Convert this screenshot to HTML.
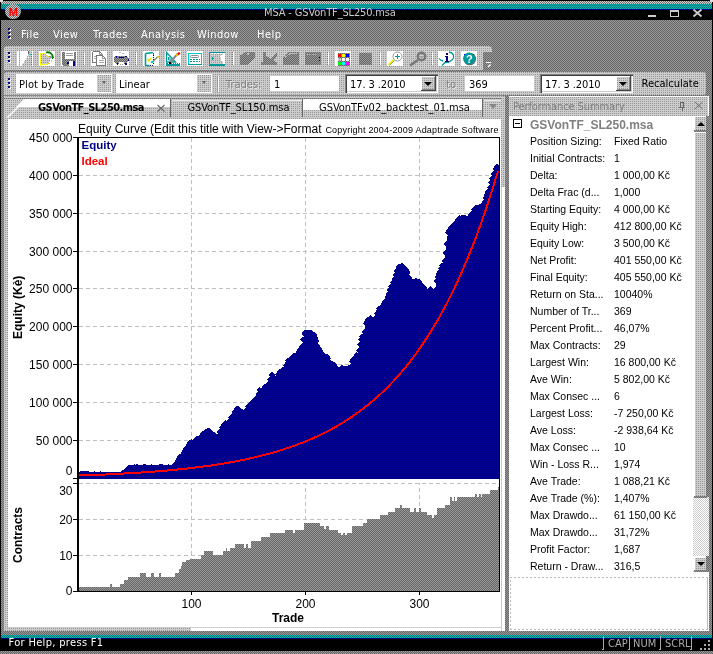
<!DOCTYPE html>
<html><head><meta charset="utf-8"><title>MSA - GSVonTF_SL250.msa</title>
<style>
html,body{margin:0;padding:0}
body{width:713px;height:654px;position:relative;overflow:hidden;font-family:"DejaVu Sans Condensed","Liberation Sans",sans-serif;font-size:11px;color:#000}
.abs{position:absolute;white-space:nowrap}
.dk{background:repeating-conic-gradient(#999 0% 25%,#666 0% 50%) 0 0/2px 2px}
.lt{background:#ccc conic-gradient(#999 25%,#ccc 0) 0 0/2px 2px}
.fr{background:repeating-conic-gradient(#ccc 0% 25%,#707070 0% 50%) 0 0/2px 2px}
.tl{background:repeating-conic-gradient(#00b4b4 0% 25%,#007878 0% 50%) 0 0/2px 2px}
.mn{color:#fff;letter-spacing:0.45px;top:28px;line-height:13px}
.rw{font-family:"Liberation Sans",sans-serif;font-size:10.5px;line-height:13px}
.tb{line-height:13px}
.wh{background:#fff}
</style></head><body>
<div class="abs dk" style="left:0;top:0;width:713px;height:654px"></div>
<div class="abs" style="left:0;top:0;width:713px;height:654px;will-change:transform">
<!-- title bar -->
<div class="abs" style="left:0;top:0;width:713px;height:1px;background:#000"></div>
<div class="abs fr" style="left:1px;top:1px;width:711px;height:3px"></div>
<div class="abs tl" style="left:1px;top:4px;width:711px;height:5px"></div>
<div class="abs" style="left:1px;top:9px;width:711px;height:1px;background:#000090"></div>
<div class="abs" style="left:0;top:10px;width:713px;height:10px;background:#000"></div>
<div class="abs" style="left:0;top:0;width:1px;height:654px;background:#000"></div>
<div class="abs" style="left:712px;top:0;width:1px;height:654px;background:#000"></div>
<div class="abs" style="left:0;top:0;width:3px;height:2px;background:#ddd"></div>
<div class="abs" style="left:710px;top:0;width:3px;height:2px;background:#ddd"></div>
<div class="abs fr" style="left:5px;top:4px;width:16px;height:15px;border-radius:8px"></div>
<div class="abs" style="left:8px;top:6px;width:10px;height:12px;font:bold 11px/12px 'Liberation Sans',sans-serif;color:#f00;text-align:center;letter-spacing:-0.5px">M</div>
<div class="abs tb" style="left:264px;top:6px;color:#ccc;letter-spacing:-0.15px">MSA - GSVonTF_SL250.msa</div>
<svg class="abs" style="left:640px;top:8px" width="70" height="12" viewBox="640 8 70 12" shape-rendering="crispEdges"><g fill="none" stroke="#ccc"><path d="M648,16h8" stroke-width="2"/><rect x="670.5" y="10.5" width="8" height="6"/><path d="M670,11h9" stroke-width="2"/><path d="M693.5,9.5l8,7M701.5,9.5l-8,7" stroke-width="1.8" shape-rendering="auto"/></g></svg>
<!-- menu -->
<div class="abs" style="left:9px;top:29px;width:2px;height:2px;background:#fff"></div><div class="abs" style="left:8px;top:28px;width:2px;height:2px;background:#000080"></div><div class="abs" style="left:9px;top:33px;width:2px;height:2px;background:#fff"></div><div class="abs" style="left:8px;top:32px;width:2px;height:2px;background:#000080"></div><div class="abs" style="left:9px;top:37px;width:2px;height:2px;background:#fff"></div><div class="abs" style="left:8px;top:36px;width:2px;height:2px;background:#000080"></div>
<div class="abs mn" style="left:21px">File</div><div class="abs mn" style="left:53px">View</div><div class="abs mn" style="left:93px">Trades</div><div class="abs mn" style="left:141px">Analysis</div><div class="abs mn" style="left:197px">Window</div><div class="abs mn" style="left:257px">Help</div>
<!-- toolbar 1 -->
<div class="abs lt" style="left:4px;top:46px;width:488px;height:6px;border-radius:3px 4px 0 0"></div><div class="abs lt" style="left:4px;top:52px;width:479px;height:18px"></div>
<div class="abs" style="left:9px;top:53px;width:2px;height:2px;background:#fff"></div><div class="abs" style="left:8px;top:52px;width:2px;height:2px;background:#000080"></div><div class="abs" style="left:9px;top:57px;width:2px;height:2px;background:#fff"></div><div class="abs" style="left:8px;top:56px;width:2px;height:2px;background:#000080"></div><div class="abs" style="left:9px;top:61px;width:2px;height:2px;background:#fff"></div><div class="abs" style="left:8px;top:60px;width:2px;height:2px;background:#000080"></div>
<svg class="abs" style="left:0;top:46px" width="500" height="24" viewBox="0 46 500 24" shape-rendering="crispEdges">
<defs><pattern id="dk2" width="2" height="2" patternUnits="userSpaceOnUse"><rect width="2" height="2" fill="#666"/><rect width="1" height="1" fill="#999"/><rect x="1" y="1" width="1" height="1" fill="#999"/></pattern>
<pattern id="lt2" width="2" height="2" patternUnits="userSpaceOnUse"><rect width="2" height="2" fill="#ccc"/><rect x="1" width="1" height="1" fill="#999"/></pattern></defs>
<rect x="17" y="51" width="2" height="15" fill="#fff"/><path d="M20,51H28V55.5L21.5,66H20Z" fill="#fff"/><rect x="32" y="51" width="1" height="15" fill="#fff"/><path d="M31.5,54v12" stroke="#666" stroke-dasharray="1 1"/><path d="M28.5,51v3" stroke="#666"/><rect x="30" y="54" width="1" height="1" fill="#0cc"/><rect x="28" y="57" width="1" height="1" fill="#fff"/><rect x="39" y="51" width="16" height="15" fill="#fff"/><path d="M41,54H45L47,56H51V58L49,64H41Z" fill="url(#lt2)"/><path d="M40.5,53.5V65.5" stroke="#ff0" stroke-width="1.4" fill="none"/><path d="M40,53.5H45M41,64.5H48" stroke="#ff0" stroke-width="1" fill="none"/><path d="M45,54.5l2,2h3M48.5,64l2-1.5l1.5-2.5" stroke="#dd0" fill="none" stroke-dasharray="2 1"/><path d="M46,52.5C50,51.5 53,54 53,58" stroke="#008000" stroke-width="1.8" fill="none" shape-rendering="auto"/><path d="M50.5,57h3.5l-1.5,2.5z" fill="#080"/><rect x="50" y="56" width="2" height="2" fill="#999"/><rect x="61" y="51" width="16" height="15" fill="#fff"/><path d="M62,52H76V66H63L62,65Z" fill="url(#dk2)"/><rect x="65" y="52" width="9" height="6.5" fill="#fff"/><path d="M66,53.5h7M66,55.5h7" stroke="#999"/><rect x="66" y="60" width="8" height="6" fill="url(#dk2)"/><rect x="69" y="60.5" width="4" height="5.5" fill="#fff"/><rect x="73" y="61" width="2" height="5" fill="#000080"/><rect x="67" y="62" width="2" height="2" fill="#000080"/><rect x="84" y="52" width="1" height="13" fill="#fff"/><path d="M83.5,52v13" stroke="#777" stroke-dasharray="1 1"/><rect x="91" y="51" width="16" height="15" fill="#fff"/><g fill="none" stroke="#777"><path d="M92.5,51.5H99.5L102.5,54.5V56M92.5,51.5V62.5H96"/><path d="M96.5,55.5H102.5L105.5,58.5V65.5H96.5Z"/><path d="M99,60.5h5M99,62.5h5M94,56.5h2M94,58.5h2" stroke="#aaa"/><path d="M99.5,51.5v3h3M102.5,55.5v3h3" stroke="#999"/></g><rect x="113" y="51" width="16" height="15" fill="#fff"/><path d="M113.5,58L116,55.5H126L128.5,58V61L126,63.5H116L113.5,61Z" fill="url(#dk2)"/><rect x="118" y="51" width="6" height="5" fill="#fff"/><path d="M118.5,52h2M122,53h2" stroke="#bbb"/><path d="M119,57.5h5" stroke="#000080"/><rect x="116" y="56" width="1" height="2" fill="#000080"/><rect x="125" y="56" width="2" height="1" fill="#000080"/><rect x="128" y="59" width="1" height="2" fill="#000080"/><rect x="116.5" y="62.5" width="1.5" height="2" fill="#000080"/><rect x="125" y="63" width="1.5" height="2" fill="#000080"/><rect x="119" y="62" width="5" height="4" fill="#fff"/><path d="M120,64h3" stroke="#999" stroke-dasharray="1 1"/><rect x="136" y="52" width="1" height="13" fill="#fff"/><path d="M135.5,52v13" stroke="#777" stroke-dasharray="1 1"/><rect x="143" y="51" width="16" height="15" fill="#fff"/><path d="M145.5,53.5L153,52.5M145.5,53.5V65.5M145,65.2L149.5,65.8" stroke="#099" stroke-width="1.6" fill="none" shape-rendering="auto"/><path d="M153.5,53v2" stroke="#099"/><path d="M153.5,55v9M150,65.5h3" stroke="#000080" stroke-dasharray="1 1"/><path d="M147.5,59l1.5,2l2-3" stroke="#dd0" stroke-width="1.4" fill="none" shape-rendering="auto"/><path d="M157.5,57L152.5,62" stroke="#888" stroke-width="1.6" shape-rendering="auto"/><rect x="157" y="56" width="2" height="2" fill="#cc0"/><rect x="151" y="61" width="2" height="2" fill="#0cc"/><rect x="165" y="51" width="16" height="15" fill="#fff"/><path d="M166.5,52.5V62H175.5Z" fill="none" stroke="#099" stroke-width="1.3" shape-rendering="auto"/><path d="M168.5,57v3h3z" fill="none" stroke="#099" shape-rendering="auto"/><rect x="166" y="62.5" width="14" height="3" fill="#099"/><path d="M167.5,63.5h12" stroke="#fff" stroke-dasharray="1 1"/><path d="M169.5,63L177.5,54" stroke="#888" stroke-width="2" shape-rendering="auto"/><path d="M177,53.5l2-1.5l1.5,1.5l-2,2z" fill="#f00" shape-rendering="auto"/><rect x="176" y="54" width="1.5" height="1.5" fill="#cc0"/><rect x="169" y="62" width="1.5" height="1.5" fill="#000"/><rect x="187" y="51" width="16" height="15" fill="#fff"/><rect x="188.5" y="53.5" width="13" height="10.5" fill="none" stroke="#0cc"/><path d="M188,64.5h14" stroke="#099"/><path d="M189,53h13" stroke="#0cc"/><rect x="190.5" y="55.5" width="8" height="2" fill="none" stroke="#888" rx="1" shape-rendering="auto"/><path d="M190,59.5h10M190,61.5h10" stroke="#099" stroke-dasharray="2 1"/><rect x="210" y="52" width="14" height="13" fill="url(#lt2)"/><rect x="209.5" y="52.5" width="15" height="12.5" fill="none" stroke="#099"/><path d="M209,64.5h16" stroke="#099" stroke-width="2"/><path d="M211,53.5h13" stroke="#fff" stroke-dasharray="2 1"/><path d="M212,57v3l2-1.5z" fill="#099"/><rect x="221" y="55" width="1.5" height="6" fill="#fff"/><rect x="220" y="56" width="1" height="1" fill="#fff"/><rect x="223" y="53" width="1.5" height="11" fill="#fff"/><rect x="233" y="52" width="1" height="13" fill="#fff"/><path d="M232.5,52v13" stroke="#777" stroke-dasharray="1 1"/><path d="M240,55.5L246,51.5H254.5V58L248,64.5L240,65Z" fill="url(#dk2)"/><rect x="247" y="53" width="2" height="2" fill="url(#lt2)"/><path d="M263,51.5h2.5V61.5H263ZM261,62h16v3H261ZM266,55.5L271,59L277,52V57L273,60L277,63H266Z" fill="url(#dk2)"/><path d="M283,57L289,51.5H298.5V65H283Z" fill="url(#dk2)"/><path d="M285,57.5L290,53.5H297" stroke="#bbb" fill="none"/><rect x="305" y="52" width="15.5" height="13" fill="url(#dk2)"/><path d="M306,54.5h13" stroke="#aaa" stroke-dasharray="2 1"/><rect x="319" y="57" width="1" height="1" fill="#000"/><rect x="319" y="60" width="1" height="1" fill="#000"/><rect x="328" y="52" width="1" height="13" fill="#fff"/><path d="M327.5,52v13" stroke="#777" stroke-dasharray="1 1"/><rect x="335" y="51" width="16" height="15" fill="#fff"/><rect x="337.5" y="53" width="12" height="12.5" fill="url(#dk2)"/><rect x="338" y="53.5" width="3" height="3" fill="#f00"/><rect x="342" y="53.5" width="3" height="3" fill="#ff0"/><rect x="346" y="53.5" width="3" height="3" fill="#00f"/><rect x="338" y="58.0" width="3" height="3" fill="url(#lt2)"/><rect x="342" y="58.0" width="3" height="3" fill="#fff"/><rect x="346" y="58.0" width="3" height="3" fill="#fff"/><rect x="338" y="62.0" width="3" height="3" fill="#0f0"/><rect x="342" y="62.0" width="3" height="3" fill="#0ff"/><rect x="346" y="62.0" width="3" height="3" fill="#f0f"/><rect x="359" y="53" width="13" height="12" fill="url(#dk2)"/><rect x="380" y="52" width="1" height="13" fill="#fff"/><path d="M379.5,52v13" stroke="#777" stroke-dasharray="1 1"/><rect x="387" y="51" width="16" height="15" fill="#fff"/><circle cx="397.5" cy="56.5" r="4.5" fill="#fff" stroke="#999" shape-rendering="auto"/><path d="M397.5,54v5M395,56.5h5" stroke="#099" stroke-width="1.2"/><path d="M388.5,65L394,59.5" stroke="#ee0" stroke-width="1.8" shape-rendering="auto"/><path d="M389.5,65.5L394.5,60.5" stroke="#888" stroke-width="0.8" shape-rendering="auto"/><g shape-rendering="auto"><circle cx="421.5" cy="56.5" r="3.8" fill="none" stroke="#777" stroke-width="2.4"/><path d="M418,60L410,65.5" stroke="#777" stroke-width="2.6"/><path d="M420,57h3" stroke="#888"/></g><rect x="432" y="52" width="1" height="13" fill="#fff"/><path d="M431.5,52v13" stroke="#777" stroke-dasharray="1 1"/><rect x="438" y="51" width="17" height="15" fill="#fff"/><path d="M449,52C454,53 455,57 452,60C450,62 446,62.5 445,62.5L442,65.5M439,58.5C440,60 441,60.5 443,61" fill="none" stroke="#099" stroke-width="1.3" shape-rendering="auto"/><rect x="446" y="52.5" width="2" height="2" fill="#000080"/><rect x="446" y="56" width="2" height="5" fill="#000080"/><rect x="445" y="56" width="1" height="1" fill="#000080"/><rect x="445" y="60.5" width="4" height="1" fill="#000080"/><rect x="461" y="51" width="16" height="15" fill="#fff"/><g shape-rendering="auto"><circle cx="469.8" cy="59" r="6.3" fill="#666"/><circle cx="469.2" cy="58.5" r="6" fill="#099"/><text x="469.3" y="63" font-family="'Liberation Sans',sans-serif" font-weight="bold" font-size="11" text-anchor="middle" fill="#fff">?</text></g><rect x="464" y="54" width="1" height="1" fill="#00f"/><rect x="473" y="54" width="1" height="1" fill="#00f"/><path d="M486,62.5h5" stroke="#fff"/><path d="M490.5,64.5L488,67" stroke="#fff" stroke-width="1.3" shape-rendering="auto"/></svg>
<!-- toolbar 2 -->
<div class="abs lt" style="left:4px;top:72px;width:702px;height:23px;border-radius:3px 3px 3px 0"></div>
<div class="abs" style="left:9px;top:79px;width:2px;height:2px;background:#fff"></div><div class="abs" style="left:8px;top:78px;width:2px;height:2px;background:#000080"></div><div class="abs" style="left:9px;top:83px;width:2px;height:2px;background:#fff"></div><div class="abs" style="left:8px;top:82px;width:2px;height:2px;background:#000080"></div><div class="abs" style="left:9px;top:87px;width:2px;height:2px;background:#fff"></div><div class="abs" style="left:8px;top:86px;width:2px;height:2px;background:#000080"></div>
<div class="abs wh" style="left:16px;top:74px;width:96px;height:19px"></div>
<div class="abs tb" style="left:19px;top:78px;letter-spacing:0.1px">Plot by Trade</div>
<div class="abs lt" style="left:97px;top:75px;width:14px;height:17px"></div>
<div class="abs" style="left:102px;top:81px;border:2.5px solid transparent;border-top:3px solid #666;width:0;height:0"></div>
<div class="abs wh" style="left:116px;top:74px;width:96px;height:19px"></div>
<div class="abs tb" style="left:119px;top:78px">Linear</div>
<div class="abs lt" style="left:197px;top:75px;width:14px;height:17px"></div>
<div class="abs" style="left:202px;top:81px;border:2.5px solid transparent;border-top:3px solid #666;width:0;height:0"></div>
<div class="abs" style="left:218px;top:76px;width:1px;height:16px;background:#fff"></div><div class="abs" style="left:217px;top:76px;width:1px;height:16px;background:#999"></div>
<div class="abs tb" style="left:226px;top:78px;color:#808080;text-shadow:1px 1px 0 #e8e8e8">Trades:</div>
<div class="abs wh" style="left:270px;top:76px;width:69px;height:15px"></div>
<div class="abs tb" style="left:274px;top:78px">1</div>
<div class="abs wh" style="left:345px;top:74px;width:93px;height:19px;box-shadow:inset 1px 1px 0 #808080,inset 2px 2px 0 #404040,inset -1px -1px 0 #fff,inset -2px -2px 0 #ccc"></div>
<div class="abs tb" style="left:350px;top:78px;letter-spacing:-0.1px">17. 3 .2010</div>
<div class="abs lt" style="left:421px;top:76px;width:15px;height:15px;box-shadow:inset -1px -1px 0 #444,inset 1px 1px 0 #fff,inset -2px -2px 0 #888"></div>
<div class="abs" style="left:424px;top:81.5px;border:4px solid transparent;border-top:4.5px solid #000;width:0;height:0"></div>
<div class="abs tb" style="left:446px;top:78px;color:#808080;text-shadow:1px 1px 0 #e8e8e8">to</div>
<div class="abs wh" style="left:465px;top:76px;width:69px;height:15px"></div>
<div class="abs tb" style="left:469px;top:78px">369</div>
<div class="abs wh" style="left:540px;top:74px;width:93px;height:19px;box-shadow:inset 1px 1px 0 #808080,inset 2px 2px 0 #404040,inset -1px -1px 0 #fff,inset -2px -2px 0 #ccc"></div>
<div class="abs tb" style="left:545px;top:78px;letter-spacing:-0.1px">17. 3 .2010</div>
<div class="abs lt" style="left:616px;top:76px;width:15px;height:15px;box-shadow:inset -1px -1px 0 #444,inset 1px 1px 0 #fff,inset -2px -2px 0 #888"></div>
<div class="abs" style="left:619px;top:81.5px;border:4px solid transparent;border-top:4.5px solid #000;width:0;height:0"></div>
<div class="abs tb" style="left:641.5px;top:77px">Recalculate</div>
<!-- tab strip -->
<div class="abs lt" style="left:4px;top:96px;width:501px;height:535px"></div>
<div class="abs" style="left:4px;top:95px;width:498px;height:1px;background:#888"></div>
<div class="abs dk" style="left:4px;top:98px;width:498px;height:1px"></div>
<svg class="abs" style="left:4px;top:98px" width="498" height="21" viewBox="4 98 498 21">
<path d="M16,107 L24,99 H170 V107 Z" fill="#fff"/>
<path d="M303,99 H482 V110 H303 Z" fill="#fff"/>
<path d="M7.5,117.5 L25.5,99.5" stroke="#fff" stroke-width="1.4" fill="none"/>
<path d="M172,100.5H302M484,100.5H501" stroke="#e8e8e8" stroke-width="1" shape-rendering="crispEdges"/>
<g stroke="#666" stroke-width="1" shape-rendering="crispEdges"><line x1="170.5" x2="170.5" y1="99" y2="117"/><line x1="302.5" x2="302.5" y1="99" y2="117"/><line x1="482.5" x2="482.5" y1="99" y2="117"/></g>
<path d="M157.5,105l7,6.5M164.5,105l-7,6.5" stroke="#666" stroke-width="1.1" fill="none"/>
<path d="M489,104h8l-4,5z" fill="#888"/>
</svg>
<div class="abs lt" style="left:303px;top:110px;width:179px;height:8px"></div>
<div class="abs tb" style="left:38px;top:101px;font-weight:bold;letter-spacing:-0.55px">GSVonTF_SL250.msa</div>
<div class="abs tb" style="left:187.5px;top:101px;letter-spacing:-0.1px">GSVonTF_SL150.msa</div>
<div class="abs tb" style="left:319px;top:101px;letter-spacing:-0.02px">GSVonTFv02_backtest_01.msa</div>
<!-- chart area -->
<div class="abs wh" style="left:8px;top:119px;width:493px;height:508px"></div>
<div class="abs wh" style="left:191px;top:627px;width:314px;height:4px;border-top:1px solid #ccc;box-sizing:border-box"></div>
<div class="abs wh" style="left:501px;top:187px;width:4px;height:444px;border-left:1px solid #ccc;box-sizing:border-box"></div>
<svg class="abs" style="left:0;top:0" width="713" height="654" viewBox="0 0 713 654" shape-rendering="crispEdges">
<defs>
<pattern id="dk" width="2" height="2" patternUnits="userSpaceOnUse"><rect width="2" height="2" fill="#666"/><rect width="1" height="1" fill="#999"/><rect x="1" y="1" width="1" height="1" fill="#999"/></pattern>
<pattern id="nv" width="2" height="2" patternUnits="userSpaceOnUse"><rect width="2" height="2" fill="#000080"/><rect width="1" height="1" fill="#000099"/><rect x="1" y="1" width="1" height="1" fill="#000099"/></pattern>
<clipPath id="cp"><rect x="79" y="138" width="420" height="341"/></clipPath>
</defs>
<g stroke="#c0c0c0" stroke-dasharray="4 3" stroke-width="1"><line x1="79" x2="499" y1="440.5" y2="440.5"/><line x1="79" x2="499" y1="402.5" y2="402.5"/><line x1="79" x2="499" y1="364.5" y2="364.5"/><line x1="79" x2="499" y1="326.5" y2="326.5"/><line x1="79" x2="499" y1="288.5" y2="288.5"/><line x1="79" x2="499" y1="251.5" y2="251.5"/><line x1="79" x2="499" y1="213.5" y2="213.5"/><line x1="79" x2="499" y1="175.5" y2="175.5"/><line x1="79" x2="499" y1="555.5" y2="555.5"/><line x1="79" x2="499" y1="519.5" y2="519.5"/><line x1="79" x2="499" y1="483.5" y2="483.5"/><line x1="191.5" x2="191.5" y1="138" y2="590"/><line x1="305.5" x2="305.5" y1="138" y2="590"/><line x1="419.5" x2="419.5" y1="138" y2="590"/></g>
<path d="M78,478.6 L78.4,474.7 L79.6,474.5 L80.7,474.3 L81.9,474.0 L83.0,473.8 L84.1,474.1 L85.3,474.0 L86.4,474.2 L87.6,474.3 L88.7,474.3 L89.8,475.1 L91.0,474.8 L92.1,474.7 L93.3,474.5 L94.4,474.4 L95.5,474.8 L96.7,474.6 L97.8,474.4 L99.0,474.3 L100.1,474.1 L101.2,474.6 L102.4,474.5 L103.5,474.5 L104.7,474.4 L105.8,474.4 L106.9,474.9 L108.1,474.8 L109.2,474.8 L110.4,474.7 L111.5,474.6 L112.6,474.9 L113.8,474.8 L114.9,474.7 L116.1,474.5 L117.2,474.4 L118.3,474.8 L119.5,474.9 L120.6,474.9 L121.8,473.8 L122.9,472.2 L124.0,473.0 L125.2,471.6 L126.3,470.2 L127.5,468.7 L128.6,467.5 L129.7,468.0 L130.9,467.5 L132.0,467.4 L133.2,467.3 L134.3,467.2 L135.4,467.6 L136.6,467.4 L137.7,467.3 L138.9,467.2 L140.0,467.1 L141.1,467.5 L142.3,467.4 L143.4,467.4 L144.6,467.3 L145.7,467.2 L146.8,467.6 L148.0,467.5 L149.1,467.5 L150.3,467.4 L151.4,467.3 L152.5,467.6 L153.7,467.5 L154.8,467.4 L156.0,467.3 L157.1,467.2 L158.2,467.5 L159.4,467.4 L160.5,467.3 L161.7,467.3 L162.8,467.2 L163.9,467.7 L165.1,467.6 L166.2,467.6 L167.4,467.5 L168.5,467.4 L169.6,467.9 L170.8,467.8 L171.9,468.2 L173.1,467.4 L174.2,465.2 L175.3,465.8 L176.5,463.5 L177.6,461.3 L178.8,459.0 L179.9,456.8 L181.0,457.3 L182.2,455.2 L183.3,453.1 L184.5,450.9 L185.6,448.6 L186.7,449.0 L187.9,446.6 L189.0,444.3 L190.2,442.7 L191.3,442.2 L192.4,443.0 L193.6,442.1 L194.7,441.1 L195.9,440.0 L197.0,438.9 L198.1,439.7 L199.3,438.8 L200.4,437.5 L201.6,436.0 L202.7,434.3 L203.8,435.3 L205.0,433.4 L206.1,431.7 L207.3,431.0 L208.4,430.5 L209.5,431.1 L210.7,432.2 L211.8,433.4 L213.0,434.1 L214.1,434.5 L215.2,437.4 L216.4,437.2 L217.5,438.3 L218.7,435.8 L219.8,431.9 L220.9,430.8 L222.1,427.5 L223.2,426.2 L224.4,424.6 L225.5,423.4 L226.6,424.2 L227.8,422.9 L228.9,421.9 L230.1,420.2 L231.2,417.4 L232.3,417.3 L233.5,414.5 L234.6,412.3 L235.8,410.3 L236.9,408.3 L238.0,408.1 L239.2,410.4 L240.3,411.4 L241.5,412.1 L242.6,411.7 L243.7,412.4 L244.9,411.3 L246.0,410.3 L247.2,409.1 L248.3,406.7 L249.4,406.1 L250.6,404.2 L251.7,402.6 L252.9,401.4 L254.0,400.2 L255.1,401.4 L256.3,400.2 L257.4,397.5 L258.6,393.9 L259.7,390.3 L260.8,391.8 L262.0,390.0 L263.1,389.0 L264.3,388.0 L265.4,386.6 L266.5,387.6 L267.7,385.9 L268.8,383.7 L270.0,379.4 L271.1,375.1 L272.2,375.1 L273.4,377.0 L274.5,377.9 L275.7,378.7 L276.8,377.9 L277.9,374.4 L279.1,373.3 L280.2,371.7 L281.4,370.8 L282.5,370.0 L283.6,371.5 L284.8,368.7 L285.9,365.9 L287.1,363.0 L288.2,360.8 L289.3,361.8 L290.5,360.1 L291.6,358.4 L292.8,356.6 L293.9,355.2 L295.0,356.0 L296.2,355.3 L297.3,354.6 L298.5,352.3 L299.6,349.8 L300.7,350.0 L301.9,346.2 L303.0,339.8 L304.2,334.0 L305.3,332.6 L306.4,333.2 L307.6,333.0 L308.7,333.0 L309.9,332.9 L311.0,332.9 L312.1,333.6 L313.3,334.6 L314.4,335.4 L315.6,338.1 L316.7,340.8 L317.8,346.2 L319.0,348.5 L320.1,350.9 L321.3,353.2 L322.4,354.4 L323.5,356.3 L324.7,356.1 L325.8,356.6 L327.0,356.9 L328.1,358.2 L329.2,362.3 L330.4,363.3 L331.5,363.6 L332.7,364.0 L333.8,364.5 L334.9,367.3 L336.1,368.1 L337.2,369.0 L338.4,371.1 L339.5,370.0 L340.6,368.8 L341.8,367.4 L342.9,368.5 L344.1,368.8 L345.2,369.0 L346.3,369.3 L347.5,368.9 L348.6,368.3 L349.8,368.0 L350.9,366.3 L352.0,361.2 L353.2,359.7 L354.3,358.0 L355.5,356.6 L356.6,355.2 L357.7,356.5 L358.9,350.8 L360.0,344.9 L361.2,339.8 L362.3,336.4 L363.4,335.7 L364.6,332.3 L365.7,323.4 L366.9,321.4 L368.0,319.4 L369.1,319.3 L370.3,318.1 L371.4,319.3 L372.6,319.6 L373.7,320.3 L374.8,320.0 L376.0,317.0 L377.1,313.9 L378.3,310.9 L379.4,308.6 L380.5,309.5 L381.7,307.6 L382.8,305.7 L384.0,303.8 L385.1,301.4 L386.2,300.7 L387.4,297.2 L388.5,293.7 L389.7,290.2 L390.8,286.7 L391.9,286.0 L393.1,282.5 L394.2,278.9 L395.4,275.1 L396.5,271.4 L397.6,270.4 L398.8,267.2 L399.9,266.2 L401.1,266.1 L402.2,266.1 L403.3,267.6 L404.5,268.1 L405.6,269.6 L406.8,271.4 L407.9,273.1 L409.0,277.6 L410.2,279.7 L411.3,282.1 L412.5,284.3 L413.6,282.4 L414.7,282.5 L415.9,280.3 L417.0,281.2 L418.2,281.8 L419.3,282.2 L420.4,284.7 L421.6,285.5 L422.7,286.0 L423.9,287.5 L425.0,289.1 L426.1,293.3 L427.3,293.8 L428.4,292.9 L429.6,290.6 L430.7,288.8 L431.8,292.7 L433.0,293.2 L434.1,295.1 L435.3,289.9 L436.4,281.4 L437.5,276.8 L438.7,274.1 L439.8,271.3 L441.0,268.5 L442.1,265.7 L443.2,265.7 L444.4,261.0 L445.5,252.6 L446.7,244.2 L447.8,232.8 L448.9,230.5 L450.1,229.0 L451.2,227.4 L452.4,226.0 L453.5,224.6 L454.6,225.9 L455.8,224.0 L456.9,222.0 L458.1,219.9 L459.2,217.9 L460.3,218.8 L461.5,218.2 L462.6,218.1 L463.8,218.0 L464.9,217.9 L466.0,218.2 L467.2,218.4 L468.3,218.7 L469.5,217.3 L470.6,214.8 L471.7,215.0 L472.9,212.4 L474.0,209.9 L475.2,208.4 L476.3,207.6 L477.4,208.2 L478.6,207.6 L479.7,207.0 L480.9,206.4 L482.0,205.7 L483.1,206.1 L484.3,202.0 L485.4,198.1 L486.6,194.9 L487.7,191.8 L488.8,191.3 L490.0,187.5 L491.1,182.9 L492.3,178.4 L493.4,174.4 L494.5,173.1 L495.7,169.1 L496.8,166.7 L498.0,167.6 L499.5,167.6 L499.5,478.6 Z" fill="url(#nv)"/>
<path d="M78.4,471.7l3.0,3.0l-3.0,3.0l-3.0,-3.0zM79.6,471.5l3.0,3.0l-3.0,3.0l-3.0,-3.0zM80.7,471.3l3.0,3.0l-3.0,3.0l-3.0,-3.0zM81.9,471.0l3.0,3.0l-3.0,3.0l-3.0,-3.0zM83.0,470.8l3.0,3.0l-3.0,3.0l-3.0,-3.0zM84.1,471.1l3.0,3.0l-3.0,3.0l-3.0,-3.0zM85.3,471.0l3.0,3.0l-3.0,3.0l-3.0,-3.0zM86.4,471.2l3.0,3.0l-3.0,3.0l-3.0,-3.0zM87.6,471.3l3.0,3.0l-3.0,3.0l-3.0,-3.0zM88.7,471.3l3.0,3.0l-3.0,3.0l-3.0,-3.0zM89.8,472.1l3.0,3.0l-3.0,3.0l-3.0,-3.0zM91.0,471.8l3.0,3.0l-3.0,3.0l-3.0,-3.0zM92.1,471.7l3.0,3.0l-3.0,3.0l-3.0,-3.0zM93.3,471.5l3.0,3.0l-3.0,3.0l-3.0,-3.0zM94.4,471.4l3.0,3.0l-3.0,3.0l-3.0,-3.0zM95.5,471.8l3.0,3.0l-3.0,3.0l-3.0,-3.0zM96.7,471.6l3.0,3.0l-3.0,3.0l-3.0,-3.0zM97.8,471.4l3.0,3.0l-3.0,3.0l-3.0,-3.0zM99.0,471.3l3.0,3.0l-3.0,3.0l-3.0,-3.0zM100.1,471.1l3.0,3.0l-3.0,3.0l-3.0,-3.0zM101.2,471.6l3.0,3.0l-3.0,3.0l-3.0,-3.0zM102.4,471.5l3.0,3.0l-3.0,3.0l-3.0,-3.0zM103.5,471.5l3.0,3.0l-3.0,3.0l-3.0,-3.0zM104.7,471.4l3.0,3.0l-3.0,3.0l-3.0,-3.0zM105.8,471.4l3.0,3.0l-3.0,3.0l-3.0,-3.0zM106.9,471.9l3.0,3.0l-3.0,3.0l-3.0,-3.0zM108.1,471.8l3.0,3.0l-3.0,3.0l-3.0,-3.0zM109.2,471.8l3.0,3.0l-3.0,3.0l-3.0,-3.0zM110.4,471.7l3.0,3.0l-3.0,3.0l-3.0,-3.0zM111.5,471.6l3.0,3.0l-3.0,3.0l-3.0,-3.0zM112.6,471.9l3.0,3.0l-3.0,3.0l-3.0,-3.0zM113.8,471.8l3.0,3.0l-3.0,3.0l-3.0,-3.0zM114.9,471.7l3.0,3.0l-3.0,3.0l-3.0,-3.0zM116.1,471.5l3.0,3.0l-3.0,3.0l-3.0,-3.0zM117.2,471.4l3.0,3.0l-3.0,3.0l-3.0,-3.0zM118.3,471.8l3.0,3.0l-3.0,3.0l-3.0,-3.0zM119.5,471.9l3.0,3.0l-3.0,3.0l-3.0,-3.0zM120.6,471.9l3.0,3.0l-3.0,3.0l-3.0,-3.0zM121.8,470.8l3.0,3.0l-3.0,3.0l-3.0,-3.0zM122.9,469.2l3.0,3.0l-3.0,3.0l-3.0,-3.0zM124.0,470.0l3.0,3.0l-3.0,3.0l-3.0,-3.0zM125.2,468.6l3.0,3.0l-3.0,3.0l-3.0,-3.0zM126.3,467.2l3.0,3.0l-3.0,3.0l-3.0,-3.0zM127.5,465.7l3.0,3.0l-3.0,3.0l-3.0,-3.0zM128.6,464.5l3.0,3.0l-3.0,3.0l-3.0,-3.0zM129.7,465.0l3.0,3.0l-3.0,3.0l-3.0,-3.0zM130.9,464.5l3.0,3.0l-3.0,3.0l-3.0,-3.0zM132.0,464.4l3.0,3.0l-3.0,3.0l-3.0,-3.0zM133.2,464.3l3.0,3.0l-3.0,3.0l-3.0,-3.0zM134.3,464.2l3.0,3.0l-3.0,3.0l-3.0,-3.0zM135.4,464.6l3.0,3.0l-3.0,3.0l-3.0,-3.0zM136.6,464.4l3.0,3.0l-3.0,3.0l-3.0,-3.0zM137.7,464.3l3.0,3.0l-3.0,3.0l-3.0,-3.0zM138.9,464.2l3.0,3.0l-3.0,3.0l-3.0,-3.0zM140.0,464.1l3.0,3.0l-3.0,3.0l-3.0,-3.0zM141.1,464.5l3.0,3.0l-3.0,3.0l-3.0,-3.0zM142.3,464.4l3.0,3.0l-3.0,3.0l-3.0,-3.0zM143.4,464.4l3.0,3.0l-3.0,3.0l-3.0,-3.0zM144.6,464.3l3.0,3.0l-3.0,3.0l-3.0,-3.0zM145.7,464.2l3.0,3.0l-3.0,3.0l-3.0,-3.0zM146.8,464.6l3.0,3.0l-3.0,3.0l-3.0,-3.0zM148.0,464.5l3.0,3.0l-3.0,3.0l-3.0,-3.0zM149.1,464.5l3.0,3.0l-3.0,3.0l-3.0,-3.0zM150.3,464.4l3.0,3.0l-3.0,3.0l-3.0,-3.0zM151.4,464.3l3.0,3.0l-3.0,3.0l-3.0,-3.0zM152.5,464.6l3.0,3.0l-3.0,3.0l-3.0,-3.0zM153.7,464.5l3.0,3.0l-3.0,3.0l-3.0,-3.0zM154.8,464.4l3.0,3.0l-3.0,3.0l-3.0,-3.0zM156.0,464.3l3.0,3.0l-3.0,3.0l-3.0,-3.0zM157.1,464.2l3.0,3.0l-3.0,3.0l-3.0,-3.0zM158.2,464.5l3.0,3.0l-3.0,3.0l-3.0,-3.0zM159.4,464.4l3.0,3.0l-3.0,3.0l-3.0,-3.0zM160.5,464.3l3.0,3.0l-3.0,3.0l-3.0,-3.0zM161.7,464.3l3.0,3.0l-3.0,3.0l-3.0,-3.0zM162.8,464.2l3.0,3.0l-3.0,3.0l-3.0,-3.0zM163.9,464.7l3.0,3.0l-3.0,3.0l-3.0,-3.0zM165.1,464.6l3.0,3.0l-3.0,3.0l-3.0,-3.0zM166.2,464.6l3.0,3.0l-3.0,3.0l-3.0,-3.0zM167.4,464.5l3.0,3.0l-3.0,3.0l-3.0,-3.0zM168.5,464.4l3.0,3.0l-3.0,3.0l-3.0,-3.0zM169.6,464.9l3.0,3.0l-3.0,3.0l-3.0,-3.0zM170.8,464.8l3.0,3.0l-3.0,3.0l-3.0,-3.0zM171.9,465.2l3.0,3.0l-3.0,3.0l-3.0,-3.0zM173.1,464.4l3.0,3.0l-3.0,3.0l-3.0,-3.0zM174.2,462.2l3.0,3.0l-3.0,3.0l-3.0,-3.0zM175.3,462.8l3.0,3.0l-3.0,3.0l-3.0,-3.0zM176.5,460.5l3.0,3.0l-3.0,3.0l-3.0,-3.0zM177.6,458.3l3.0,3.0l-3.0,3.0l-3.0,-3.0zM178.8,456.0l3.0,3.0l-3.0,3.0l-3.0,-3.0zM179.9,453.8l3.0,3.0l-3.0,3.0l-3.0,-3.0zM181.0,454.3l3.0,3.0l-3.0,3.0l-3.0,-3.0zM182.2,452.2l3.0,3.0l-3.0,3.0l-3.0,-3.0zM183.3,450.1l3.0,3.0l-3.0,3.0l-3.0,-3.0zM184.5,447.9l3.0,3.0l-3.0,3.0l-3.0,-3.0zM185.6,445.6l3.0,3.0l-3.0,3.0l-3.0,-3.0zM186.7,446.0l3.0,3.0l-3.0,3.0l-3.0,-3.0zM187.9,443.6l3.0,3.0l-3.0,3.0l-3.0,-3.0zM189.0,441.3l3.0,3.0l-3.0,3.0l-3.0,-3.0zM190.2,439.7l3.0,3.0l-3.0,3.0l-3.0,-3.0zM191.3,439.2l3.0,3.0l-3.0,3.0l-3.0,-3.0zM192.4,440.0l3.0,3.0l-3.0,3.0l-3.0,-3.0zM193.6,439.1l3.0,3.0l-3.0,3.0l-3.0,-3.0zM194.7,438.1l3.0,3.0l-3.0,3.0l-3.0,-3.0zM195.9,437.0l3.0,3.0l-3.0,3.0l-3.0,-3.0zM197.0,435.9l3.0,3.0l-3.0,3.0l-3.0,-3.0zM198.1,436.7l3.0,3.0l-3.0,3.0l-3.0,-3.0zM199.3,435.8l3.0,3.0l-3.0,3.0l-3.0,-3.0zM200.4,434.5l3.0,3.0l-3.0,3.0l-3.0,-3.0zM201.6,433.0l3.0,3.0l-3.0,3.0l-3.0,-3.0zM202.7,431.3l3.0,3.0l-3.0,3.0l-3.0,-3.0zM203.8,432.3l3.0,3.0l-3.0,3.0l-3.0,-3.0zM205.0,430.4l3.0,3.0l-3.0,3.0l-3.0,-3.0zM206.1,428.7l3.0,3.0l-3.0,3.0l-3.0,-3.0zM207.3,428.0l3.0,3.0l-3.0,3.0l-3.0,-3.0zM208.4,427.5l3.0,3.0l-3.0,3.0l-3.0,-3.0zM209.5,428.1l3.0,3.0l-3.0,3.0l-3.0,-3.0zM210.7,429.2l3.0,3.0l-3.0,3.0l-3.0,-3.0zM211.8,430.4l3.0,3.0l-3.0,3.0l-3.0,-3.0zM213.0,431.1l3.0,3.0l-3.0,3.0l-3.0,-3.0zM214.1,431.5l3.0,3.0l-3.0,3.0l-3.0,-3.0zM215.2,434.4l3.0,3.0l-3.0,3.0l-3.0,-3.0zM216.4,434.2l3.0,3.0l-3.0,3.0l-3.0,-3.0zM217.5,435.3l3.0,3.0l-3.0,3.0l-3.0,-3.0zM218.7,432.8l3.0,3.0l-3.0,3.0l-3.0,-3.0zM219.8,428.9l3.0,3.0l-3.0,3.0l-3.0,-3.0zM220.9,427.8l3.0,3.0l-3.0,3.0l-3.0,-3.0zM222.1,424.5l3.0,3.0l-3.0,3.0l-3.0,-3.0zM223.2,423.2l3.0,3.0l-3.0,3.0l-3.0,-3.0zM224.4,421.6l3.0,3.0l-3.0,3.0l-3.0,-3.0zM225.5,420.4l3.0,3.0l-3.0,3.0l-3.0,-3.0zM226.6,421.2l3.0,3.0l-3.0,3.0l-3.0,-3.0zM227.8,419.9l3.0,3.0l-3.0,3.0l-3.0,-3.0zM228.9,418.9l3.0,3.0l-3.0,3.0l-3.0,-3.0zM230.1,417.2l3.0,3.0l-3.0,3.0l-3.0,-3.0zM231.2,414.4l3.0,3.0l-3.0,3.0l-3.0,-3.0zM232.3,414.3l3.0,3.0l-3.0,3.0l-3.0,-3.0zM233.5,411.5l3.0,3.0l-3.0,3.0l-3.0,-3.0zM234.6,409.3l3.0,3.0l-3.0,3.0l-3.0,-3.0zM235.8,407.3l3.0,3.0l-3.0,3.0l-3.0,-3.0zM236.9,405.3l3.0,3.0l-3.0,3.0l-3.0,-3.0zM238.0,405.1l3.0,3.0l-3.0,3.0l-3.0,-3.0zM239.2,407.4l3.0,3.0l-3.0,3.0l-3.0,-3.0zM240.3,408.4l3.0,3.0l-3.0,3.0l-3.0,-3.0zM241.5,409.1l3.0,3.0l-3.0,3.0l-3.0,-3.0zM242.6,408.7l3.0,3.0l-3.0,3.0l-3.0,-3.0zM243.7,409.4l3.0,3.0l-3.0,3.0l-3.0,-3.0zM244.9,408.3l3.0,3.0l-3.0,3.0l-3.0,-3.0zM246.0,407.3l3.0,3.0l-3.0,3.0l-3.0,-3.0zM247.2,406.1l3.0,3.0l-3.0,3.0l-3.0,-3.0zM248.3,403.7l3.0,3.0l-3.0,3.0l-3.0,-3.0zM249.4,403.1l3.0,3.0l-3.0,3.0l-3.0,-3.0zM250.6,401.2l3.0,3.0l-3.0,3.0l-3.0,-3.0zM251.7,399.6l3.0,3.0l-3.0,3.0l-3.0,-3.0zM252.9,398.4l3.0,3.0l-3.0,3.0l-3.0,-3.0zM254.0,397.2l3.0,3.0l-3.0,3.0l-3.0,-3.0zM255.1,398.4l3.0,3.0l-3.0,3.0l-3.0,-3.0zM256.3,397.2l3.0,3.0l-3.0,3.0l-3.0,-3.0zM257.4,394.5l3.0,3.0l-3.0,3.0l-3.0,-3.0zM258.6,390.9l3.0,3.0l-3.0,3.0l-3.0,-3.0zM259.7,387.3l3.0,3.0l-3.0,3.0l-3.0,-3.0zM260.8,388.8l3.0,3.0l-3.0,3.0l-3.0,-3.0zM262.0,387.0l3.0,3.0l-3.0,3.0l-3.0,-3.0zM263.1,386.0l3.0,3.0l-3.0,3.0l-3.0,-3.0zM264.3,385.0l3.0,3.0l-3.0,3.0l-3.0,-3.0zM265.4,383.6l3.0,3.0l-3.0,3.0l-3.0,-3.0zM266.5,384.6l3.0,3.0l-3.0,3.0l-3.0,-3.0zM267.7,382.9l3.0,3.0l-3.0,3.0l-3.0,-3.0zM268.8,380.7l3.0,3.0l-3.0,3.0l-3.0,-3.0zM270.0,376.4l3.0,3.0l-3.0,3.0l-3.0,-3.0zM271.1,372.1l3.0,3.0l-3.0,3.0l-3.0,-3.0zM272.2,372.1l3.0,3.0l-3.0,3.0l-3.0,-3.0zM273.4,374.0l3.0,3.0l-3.0,3.0l-3.0,-3.0zM274.5,374.9l3.0,3.0l-3.0,3.0l-3.0,-3.0zM275.7,375.7l3.0,3.0l-3.0,3.0l-3.0,-3.0zM276.8,374.9l3.0,3.0l-3.0,3.0l-3.0,-3.0zM277.9,371.4l3.0,3.0l-3.0,3.0l-3.0,-3.0zM279.1,370.3l3.0,3.0l-3.0,3.0l-3.0,-3.0zM280.2,368.7l3.0,3.0l-3.0,3.0l-3.0,-3.0zM281.4,367.8l3.0,3.0l-3.0,3.0l-3.0,-3.0zM282.5,367.0l3.0,3.0l-3.0,3.0l-3.0,-3.0zM283.6,368.5l3.0,3.0l-3.0,3.0l-3.0,-3.0zM284.8,365.7l3.0,3.0l-3.0,3.0l-3.0,-3.0zM285.9,362.9l3.0,3.0l-3.0,3.0l-3.0,-3.0zM287.1,360.0l3.0,3.0l-3.0,3.0l-3.0,-3.0zM288.2,357.8l3.0,3.0l-3.0,3.0l-3.0,-3.0zM289.3,358.8l3.0,3.0l-3.0,3.0l-3.0,-3.0zM290.5,357.1l3.0,3.0l-3.0,3.0l-3.0,-3.0zM291.6,355.4l3.0,3.0l-3.0,3.0l-3.0,-3.0zM292.8,353.6l3.0,3.0l-3.0,3.0l-3.0,-3.0zM293.9,352.2l3.0,3.0l-3.0,3.0l-3.0,-3.0zM295.0,353.0l3.0,3.0l-3.0,3.0l-3.0,-3.0zM296.2,352.3l3.0,3.0l-3.0,3.0l-3.0,-3.0zM297.3,351.6l3.0,3.0l-3.0,3.0l-3.0,-3.0zM298.5,349.3l3.0,3.0l-3.0,3.0l-3.0,-3.0zM299.6,346.8l3.0,3.0l-3.0,3.0l-3.0,-3.0zM300.7,347.0l3.0,3.0l-3.0,3.0l-3.0,-3.0zM301.9,343.2l3.0,3.0l-3.0,3.0l-3.0,-3.0zM303.0,336.8l3.0,3.0l-3.0,3.0l-3.0,-3.0zM304.2,331.0l3.0,3.0l-3.0,3.0l-3.0,-3.0zM305.3,329.6l3.0,3.0l-3.0,3.0l-3.0,-3.0zM306.4,330.2l3.0,3.0l-3.0,3.0l-3.0,-3.0zM307.6,330.0l3.0,3.0l-3.0,3.0l-3.0,-3.0zM308.7,330.0l3.0,3.0l-3.0,3.0l-3.0,-3.0zM309.9,329.9l3.0,3.0l-3.0,3.0l-3.0,-3.0zM311.0,329.9l3.0,3.0l-3.0,3.0l-3.0,-3.0zM312.1,330.6l3.0,3.0l-3.0,3.0l-3.0,-3.0zM313.3,331.6l3.0,3.0l-3.0,3.0l-3.0,-3.0zM314.4,332.4l3.0,3.0l-3.0,3.0l-3.0,-3.0zM315.6,335.1l3.0,3.0l-3.0,3.0l-3.0,-3.0zM316.7,337.8l3.0,3.0l-3.0,3.0l-3.0,-3.0zM317.8,343.2l3.0,3.0l-3.0,3.0l-3.0,-3.0zM319.0,345.5l3.0,3.0l-3.0,3.0l-3.0,-3.0zM320.1,347.9l3.0,3.0l-3.0,3.0l-3.0,-3.0zM321.3,350.2l3.0,3.0l-3.0,3.0l-3.0,-3.0zM322.4,351.4l3.0,3.0l-3.0,3.0l-3.0,-3.0zM323.5,353.3l3.0,3.0l-3.0,3.0l-3.0,-3.0zM324.7,353.1l3.0,3.0l-3.0,3.0l-3.0,-3.0zM325.8,353.6l3.0,3.0l-3.0,3.0l-3.0,-3.0zM327.0,353.9l3.0,3.0l-3.0,3.0l-3.0,-3.0zM328.1,355.2l3.0,3.0l-3.0,3.0l-3.0,-3.0zM329.2,359.3l3.0,3.0l-3.0,3.0l-3.0,-3.0zM330.4,360.3l3.0,3.0l-3.0,3.0l-3.0,-3.0zM331.5,360.6l3.0,3.0l-3.0,3.0l-3.0,-3.0zM332.7,361.0l3.0,3.0l-3.0,3.0l-3.0,-3.0zM333.8,361.5l3.0,3.0l-3.0,3.0l-3.0,-3.0zM334.9,364.3l3.0,3.0l-3.0,3.0l-3.0,-3.0zM336.1,365.1l3.0,3.0l-3.0,3.0l-3.0,-3.0zM337.2,366.0l3.0,3.0l-3.0,3.0l-3.0,-3.0zM338.4,368.1l3.0,3.0l-3.0,3.0l-3.0,-3.0zM339.5,367.0l3.0,3.0l-3.0,3.0l-3.0,-3.0zM340.6,365.8l3.0,3.0l-3.0,3.0l-3.0,-3.0zM341.8,364.4l3.0,3.0l-3.0,3.0l-3.0,-3.0zM342.9,365.5l3.0,3.0l-3.0,3.0l-3.0,-3.0zM344.1,365.8l3.0,3.0l-3.0,3.0l-3.0,-3.0zM345.2,366.0l3.0,3.0l-3.0,3.0l-3.0,-3.0zM346.3,366.3l3.0,3.0l-3.0,3.0l-3.0,-3.0zM347.5,365.9l3.0,3.0l-3.0,3.0l-3.0,-3.0zM348.6,365.3l3.0,3.0l-3.0,3.0l-3.0,-3.0zM349.8,365.0l3.0,3.0l-3.0,3.0l-3.0,-3.0zM350.9,363.3l3.0,3.0l-3.0,3.0l-3.0,-3.0zM352.0,358.2l3.0,3.0l-3.0,3.0l-3.0,-3.0zM353.2,356.7l3.0,3.0l-3.0,3.0l-3.0,-3.0zM354.3,355.0l3.0,3.0l-3.0,3.0l-3.0,-3.0zM355.5,353.6l3.0,3.0l-3.0,3.0l-3.0,-3.0zM356.6,352.2l3.0,3.0l-3.0,3.0l-3.0,-3.0zM357.7,353.5l3.0,3.0l-3.0,3.0l-3.0,-3.0zM358.9,347.8l3.0,3.0l-3.0,3.0l-3.0,-3.0zM360.0,341.9l3.0,3.0l-3.0,3.0l-3.0,-3.0zM361.2,336.8l3.0,3.0l-3.0,3.0l-3.0,-3.0zM362.3,333.4l3.0,3.0l-3.0,3.0l-3.0,-3.0zM363.4,332.7l3.0,3.0l-3.0,3.0l-3.0,-3.0zM364.6,329.3l3.0,3.0l-3.0,3.0l-3.0,-3.0zM365.7,320.4l3.0,3.0l-3.0,3.0l-3.0,-3.0zM366.9,318.4l3.0,3.0l-3.0,3.0l-3.0,-3.0zM368.0,316.4l3.0,3.0l-3.0,3.0l-3.0,-3.0zM369.1,316.3l3.0,3.0l-3.0,3.0l-3.0,-3.0zM370.3,315.1l3.0,3.0l-3.0,3.0l-3.0,-3.0zM371.4,316.3l3.0,3.0l-3.0,3.0l-3.0,-3.0zM372.6,316.6l3.0,3.0l-3.0,3.0l-3.0,-3.0zM373.7,317.3l3.0,3.0l-3.0,3.0l-3.0,-3.0zM374.8,317.0l3.0,3.0l-3.0,3.0l-3.0,-3.0zM376.0,314.0l3.0,3.0l-3.0,3.0l-3.0,-3.0zM377.1,310.9l3.0,3.0l-3.0,3.0l-3.0,-3.0zM378.3,307.9l3.0,3.0l-3.0,3.0l-3.0,-3.0zM379.4,305.6l3.0,3.0l-3.0,3.0l-3.0,-3.0zM380.5,306.5l3.0,3.0l-3.0,3.0l-3.0,-3.0zM381.7,304.6l3.0,3.0l-3.0,3.0l-3.0,-3.0zM382.8,302.7l3.0,3.0l-3.0,3.0l-3.0,-3.0zM384.0,300.8l3.0,3.0l-3.0,3.0l-3.0,-3.0zM385.1,298.4l3.0,3.0l-3.0,3.0l-3.0,-3.0zM386.2,297.7l3.0,3.0l-3.0,3.0l-3.0,-3.0zM387.4,294.2l3.0,3.0l-3.0,3.0l-3.0,-3.0zM388.5,290.7l3.0,3.0l-3.0,3.0l-3.0,-3.0zM389.7,287.2l3.0,3.0l-3.0,3.0l-3.0,-3.0zM390.8,283.7l3.0,3.0l-3.0,3.0l-3.0,-3.0zM391.9,283.0l3.0,3.0l-3.0,3.0l-3.0,-3.0zM393.1,279.5l3.0,3.0l-3.0,3.0l-3.0,-3.0zM394.2,275.9l3.0,3.0l-3.0,3.0l-3.0,-3.0zM395.4,272.1l3.0,3.0l-3.0,3.0l-3.0,-3.0zM396.5,268.4l3.0,3.0l-3.0,3.0l-3.0,-3.0zM397.6,267.4l3.0,3.0l-3.0,3.0l-3.0,-3.0zM398.8,264.2l3.0,3.0l-3.0,3.0l-3.0,-3.0zM399.9,263.2l3.0,3.0l-3.0,3.0l-3.0,-3.0zM401.1,263.1l3.0,3.0l-3.0,3.0l-3.0,-3.0zM402.2,263.1l3.0,3.0l-3.0,3.0l-3.0,-3.0zM403.3,264.6l3.0,3.0l-3.0,3.0l-3.0,-3.0zM404.5,265.1l3.0,3.0l-3.0,3.0l-3.0,-3.0zM405.6,266.6l3.0,3.0l-3.0,3.0l-3.0,-3.0zM406.8,268.4l3.0,3.0l-3.0,3.0l-3.0,-3.0zM407.9,270.1l3.0,3.0l-3.0,3.0l-3.0,-3.0zM409.0,274.6l3.0,3.0l-3.0,3.0l-3.0,-3.0zM410.2,276.7l3.0,3.0l-3.0,3.0l-3.0,-3.0zM411.3,279.1l3.0,3.0l-3.0,3.0l-3.0,-3.0zM412.5,281.3l3.0,3.0l-3.0,3.0l-3.0,-3.0zM413.6,279.4l3.0,3.0l-3.0,3.0l-3.0,-3.0zM414.7,279.5l3.0,3.0l-3.0,3.0l-3.0,-3.0zM415.9,277.3l3.0,3.0l-3.0,3.0l-3.0,-3.0zM417.0,278.2l3.0,3.0l-3.0,3.0l-3.0,-3.0zM418.2,278.8l3.0,3.0l-3.0,3.0l-3.0,-3.0zM419.3,279.2l3.0,3.0l-3.0,3.0l-3.0,-3.0zM420.4,281.7l3.0,3.0l-3.0,3.0l-3.0,-3.0zM421.6,282.5l3.0,3.0l-3.0,3.0l-3.0,-3.0zM422.7,283.0l3.0,3.0l-3.0,3.0l-3.0,-3.0zM423.9,284.5l3.0,3.0l-3.0,3.0l-3.0,-3.0zM425.0,286.1l3.0,3.0l-3.0,3.0l-3.0,-3.0zM426.1,290.3l3.0,3.0l-3.0,3.0l-3.0,-3.0zM427.3,290.8l3.0,3.0l-3.0,3.0l-3.0,-3.0zM428.4,289.9l3.0,3.0l-3.0,3.0l-3.0,-3.0zM429.6,287.6l3.0,3.0l-3.0,3.0l-3.0,-3.0zM430.7,285.8l3.0,3.0l-3.0,3.0l-3.0,-3.0zM431.8,289.7l3.0,3.0l-3.0,3.0l-3.0,-3.0zM433.0,290.2l3.0,3.0l-3.0,3.0l-3.0,-3.0zM434.1,292.1l3.0,3.0l-3.0,3.0l-3.0,-3.0zM435.3,286.9l3.0,3.0l-3.0,3.0l-3.0,-3.0zM436.4,278.4l3.0,3.0l-3.0,3.0l-3.0,-3.0zM437.5,273.8l3.0,3.0l-3.0,3.0l-3.0,-3.0zM438.7,271.1l3.0,3.0l-3.0,3.0l-3.0,-3.0zM439.8,268.3l3.0,3.0l-3.0,3.0l-3.0,-3.0zM441.0,265.5l3.0,3.0l-3.0,3.0l-3.0,-3.0zM442.1,262.7l3.0,3.0l-3.0,3.0l-3.0,-3.0zM443.2,262.7l3.0,3.0l-3.0,3.0l-3.0,-3.0zM444.4,258.0l3.0,3.0l-3.0,3.0l-3.0,-3.0zM445.5,249.6l3.0,3.0l-3.0,3.0l-3.0,-3.0zM446.7,241.2l3.0,3.0l-3.0,3.0l-3.0,-3.0zM447.8,229.8l3.0,3.0l-3.0,3.0l-3.0,-3.0zM448.9,227.5l3.0,3.0l-3.0,3.0l-3.0,-3.0zM450.1,226.0l3.0,3.0l-3.0,3.0l-3.0,-3.0zM451.2,224.4l3.0,3.0l-3.0,3.0l-3.0,-3.0zM452.4,223.0l3.0,3.0l-3.0,3.0l-3.0,-3.0zM453.5,221.6l3.0,3.0l-3.0,3.0l-3.0,-3.0zM454.6,222.9l3.0,3.0l-3.0,3.0l-3.0,-3.0zM455.8,221.0l3.0,3.0l-3.0,3.0l-3.0,-3.0zM456.9,219.0l3.0,3.0l-3.0,3.0l-3.0,-3.0zM458.1,216.9l3.0,3.0l-3.0,3.0l-3.0,-3.0zM459.2,214.9l3.0,3.0l-3.0,3.0l-3.0,-3.0zM460.3,215.8l3.0,3.0l-3.0,3.0l-3.0,-3.0zM461.5,215.2l3.0,3.0l-3.0,3.0l-3.0,-3.0zM462.6,215.1l3.0,3.0l-3.0,3.0l-3.0,-3.0zM463.8,215.0l3.0,3.0l-3.0,3.0l-3.0,-3.0zM464.9,214.9l3.0,3.0l-3.0,3.0l-3.0,-3.0zM466.0,215.2l3.0,3.0l-3.0,3.0l-3.0,-3.0zM467.2,215.4l3.0,3.0l-3.0,3.0l-3.0,-3.0zM468.3,215.7l3.0,3.0l-3.0,3.0l-3.0,-3.0zM469.5,214.3l3.0,3.0l-3.0,3.0l-3.0,-3.0zM470.6,211.8l3.0,3.0l-3.0,3.0l-3.0,-3.0zM471.7,212.0l3.0,3.0l-3.0,3.0l-3.0,-3.0zM472.9,209.4l3.0,3.0l-3.0,3.0l-3.0,-3.0zM474.0,206.9l3.0,3.0l-3.0,3.0l-3.0,-3.0zM475.2,205.4l3.0,3.0l-3.0,3.0l-3.0,-3.0zM476.3,204.6l3.0,3.0l-3.0,3.0l-3.0,-3.0zM477.4,205.2l3.0,3.0l-3.0,3.0l-3.0,-3.0zM478.6,204.6l3.0,3.0l-3.0,3.0l-3.0,-3.0zM479.7,204.0l3.0,3.0l-3.0,3.0l-3.0,-3.0zM480.9,203.4l3.0,3.0l-3.0,3.0l-3.0,-3.0zM482.0,202.7l3.0,3.0l-3.0,3.0l-3.0,-3.0zM483.1,203.1l3.0,3.0l-3.0,3.0l-3.0,-3.0zM484.3,199.0l3.0,3.0l-3.0,3.0l-3.0,-3.0zM485.4,195.1l3.0,3.0l-3.0,3.0l-3.0,-3.0zM486.6,191.9l3.0,3.0l-3.0,3.0l-3.0,-3.0zM487.7,188.8l3.0,3.0l-3.0,3.0l-3.0,-3.0zM488.8,188.3l3.0,3.0l-3.0,3.0l-3.0,-3.0zM490.0,184.5l3.0,3.0l-3.0,3.0l-3.0,-3.0zM491.1,179.9l3.0,3.0l-3.0,3.0l-3.0,-3.0zM492.3,175.4l3.0,3.0l-3.0,3.0l-3.0,-3.0zM493.4,171.4l3.0,3.0l-3.0,3.0l-3.0,-3.0zM494.5,170.1l3.0,3.0l-3.0,3.0l-3.0,-3.0zM495.7,166.1l3.0,3.0l-3.0,3.0l-3.0,-3.0zM496.8,163.7l3.0,3.0l-3.0,3.0l-3.0,-3.0zM498.0,164.6l3.0,3.0l-3.0,3.0l-3.0,-3.0z" fill="url(#nv)" clip-path="url(#cp)"/>
<path d="M78.4,475.5 L83.0,475.4 L87.6,475.2 L92.1,475.0 L96.7,474.8 L101.2,474.7 L105.8,474.5 L110.4,474.2 L114.9,474.0 L119.5,473.8 L124.0,473.5 L128.6,473.3 L133.2,473.0 L137.7,472.7 L142.3,472.4 L146.8,472.1 L151.4,471.8 L156.0,471.4 L160.5,471.0 L165.1,470.7 L169.6,470.2 L174.2,469.8 L178.8,469.4 L183.3,468.9 L187.9,468.4 L192.4,467.9 L197.0,467.3 L201.6,466.7 L206.1,466.1 L210.7,465.5 L215.2,464.8 L219.8,464.1 L224.4,463.4 L228.9,462.6 L233.5,461.8 L238.0,460.9 L242.6,460.0 L247.2,459.0 L251.7,458.0 L256.3,457.0 L260.8,455.9 L265.4,454.7 L270.0,453.5 L274.5,452.2 L279.1,450.8 L283.6,449.4 L288.2,447.9 L292.8,446.3 L297.3,444.6 L301.9,442.9 L306.4,441.1 L311.0,439.1 L315.6,437.1 L320.1,435.0 L324.7,432.7 L329.2,430.4 L333.8,427.9 L338.4,425.3 L342.9,422.6 L347.5,419.7 L352.0,416.7 L356.6,413.5 L361.2,410.2 L365.7,406.6 L370.3,402.9 L374.8,399.1 L379.4,395.0 L384.0,390.7 L388.5,386.2 L393.1,381.4 L397.6,376.4 L402.2,371.2 L406.8,365.7 L411.3,359.9 L415.9,353.8 L420.4,347.4 L425.0,340.6 L429.6,333.5 L434.1,326.1 L438.7,318.3 L443.2,310.0 L447.8,301.4 L452.4,292.3 L456.9,282.7 L461.5,272.7 L466.0,262.1 L470.6,251.0 L475.2,239.3 L479.7,227.0 L484.3,214.1 L488.8,200.5 L493.4,186.2 L498.0,171.2 L498.0,171.2" fill="none" stroke="#f00" stroke-width="2" stroke-linejoin="round" shape-rendering="crispEdges"/>
<path d="M78,591.0 L78.0,587.4 L110.0,587.4 L110.0,583.8 L111.5,583.8 L111.5,587.4 L120.0,587.4 L120.0,583.8 L124.0,583.8 L124.0,580.2 L128.0,580.2 L128.0,576.6 L140.0,576.6 L140.0,573.0 L146.0,573.0 L146.0,576.6 L151.0,576.6 L151.0,573.0 L154.0,573.0 L154.0,576.6 L158.6,576.6 L158.6,573.0 L160.5,573.0 L160.5,576.6 L175.0,576.6 L175.0,573.0 L179.4,573.0 L179.4,569.4 L181.0,569.4 L181.0,565.8 L182.3,565.8 L182.3,562.2 L186.0,562.2 L186.0,560.4 L189.6,560.4 L189.6,558.6 L200.6,558.6 L200.6,555.0 L204.0,555.0 L204.0,551.4 L213.0,551.4 L213.0,555.0 L222.5,555.0 L222.5,551.4 L226.0,551.4 L226.0,547.8 L227.0,547.8 L227.0,551.4 L229.8,551.4 L229.8,547.8 L235.0,547.8 L235.0,544.2 L244.0,544.2 L244.0,547.8 L246.0,547.8 L246.0,544.2 L248.0,544.2 L248.0,547.8 L251.4,547.8 L251.4,540.6 L260.8,540.6 L260.8,537.0 L270.3,537.0 L270.3,533.4 L285.4,533.4 L285.4,529.8 L293.0,529.8 L293.0,532.7 L295.0,532.7 L295.0,529.8 L304.4,529.8 L304.4,522.6 L319.5,522.6 L319.5,526.2 L324.0,526.2 L324.0,529.1 L325.5,529.1 L325.5,526.2 L329.0,526.2 L329.0,529.8 L338.4,529.8 L338.4,533.4 L341.0,533.4 L341.0,535.2 L342.5,535.2 L342.5,533.4 L345.0,533.4 L345.0,535.2 L346.5,535.2 L346.5,533.4 L351.7,533.4 L351.7,526.2 L363.0,526.2 L363.0,522.6 L366.8,522.6 L366.8,519.0 L380.0,519.0 L380.0,515.4 L387.7,515.4 L387.7,511.8 L395.2,511.8 L395.2,508.2 L400.0,508.2 L400.0,504.6 L402.0,504.6 L402.0,508.2 L410.4,508.2 L410.4,511.8 L414.0,511.8 L414.0,508.2 L415.5,508.2 L415.5,511.8 L419.0,511.8 L419.0,508.2 L420.5,508.2 L420.5,511.8 L427.4,511.8 L427.4,515.4 L432.0,515.4 L432.0,517.9 L433.5,517.9 L433.5,515.4 L436.9,515.4 L436.9,508.2 L444.5,508.2 L444.5,504.6 L450.2,504.6 L450.2,497.4 L452.0,497.4 L452.0,501.0 L453.5,501.0 L453.5,497.4 L455.0,497.4 L455.0,501.0 L456.5,501.0 L456.5,497.4 L475.0,497.4 L475.0,493.8 L476.5,493.8 L476.5,497.4 L479.0,497.4 L479.0,493.8 L480.5,493.8 L480.5,497.4 L482.3,497.4 L482.3,493.8 L489.9,493.8 L489.9,490.2 L497.5,490.2 L497.5,486.6 L499.5,486.6 L499.5,591.0 Z" fill="url(#dk)"/>
<rect x="78" y="479" width="421" height="4" fill="#fff"/>
<g stroke="#000" stroke-width="1"><line x1="77" x2="500" y1="137.5" y2="137.5"/><line x1="499.5" x2="499.5" y1="137" y2="592"/><line x1="77" x2="500" y1="591.5" y2="591.5"/></g>
<line x1="77.5" x2="77.5" y1="137" y2="592" stroke="#000" stroke-width="2"/>
<g font-family="'Liberation Sans',sans-serif" font-size="12" fill="#000" shape-rendering="auto"><style>.tk{stroke:#000;stroke-width:1}</style><text x="72.5" y="475.3" text-anchor="end">0</text><line class="tk" x1="73" x2="77" y1="478.5" y2="478.5"/><text x="72.5" y="445.0" text-anchor="end">50 000</text><line class="tk" x1="73" x2="77" y1="440.5" y2="440.5"/><text x="72.5" y="407.0" text-anchor="end">100 000</text><line class="tk" x1="73" x2="77" y1="402.5" y2="402.5"/><text x="72.5" y="369.0" text-anchor="end">150 000</text><line class="tk" x1="73" x2="77" y1="364.5" y2="364.5"/><text x="72.5" y="331.0" text-anchor="end">200 000</text><line class="tk" x1="73" x2="77" y1="326.5" y2="326.5"/><text x="72.5" y="293.0" text-anchor="end">250 000</text><line class="tk" x1="73" x2="77" y1="288.5" y2="288.5"/><text x="72.5" y="256.0" text-anchor="end">300 000</text><line class="tk" x1="73" x2="77" y1="251.5" y2="251.5"/><text x="72.5" y="218.0" text-anchor="end">350 000</text><line class="tk" x1="73" x2="77" y1="213.5" y2="213.5"/><text x="72.5" y="180.0" text-anchor="end">400 000</text><line class="tk" x1="73" x2="77" y1="175.5" y2="175.5"/><text x="72.5" y="142.0" text-anchor="end">450 000</text><line class="tk" x1="73" x2="77" y1="137.5" y2="137.5"/><text x="72.5" y="595.0" text-anchor="end">0</text><line class="tk" x1="73" x2="77" y1="591.5" y2="591.5"/><text x="72.5" y="560.2" text-anchor="end">10</text><line class="tk" x1="73" x2="77" y1="555.5" y2="555.5"/><text x="72.5" y="524.0" text-anchor="end">20</text><line class="tk" x1="73" x2="77" y1="519.5" y2="519.5"/><text x="72.5" y="494.7" text-anchor="end">30</text><line class="tk" x1="73" x2="77" y1="483.5" y2="483.5"/><text x="191.5" y="607.5" text-anchor="middle">100</text><line class="tk" x1="191.5" x2="191.5" y1="591" y2="595"/><text x="305.5" y="607.5" text-anchor="middle">200</text><line class="tk" x1="305.5" x2="305.5" y1="591" y2="595"/><text x="419.5" y="607.5" text-anchor="middle">300</text><line class="tk" x1="419.5" x2="419.5" y1="591" y2="595"/>
<text x="78" y="133">Equity Curve (Edit this title with View-&gt;Format <tspan font-size="9" letter-spacing="0.2" dx="0.5">Copyright 2004-2009 Adaptrade Software</tspan></text>
<text x="81.5" y="149" font-size="11.5" font-weight="bold" fill="#000080">Equity</text>
<text x="81.5" y="165" font-size="11.5" font-weight="bold" fill="#f00">Ideal</text>
<text x="272" y="621.5" font-weight="bold">Trade</text>
<text transform="translate(22,339) rotate(-90)" font-weight="bold">Equity (Kè)</text>
<text transform="translate(22,563) rotate(-90)" font-weight="bold">Contracts</text>
</g>
</svg>
<!-- splitter -->
<div class="abs dk" style="left:505px;top:96px;width:4px;height:540px"></div>
<!-- right panel -->
<div class="abs lt" style="left:509px;top:97px;width:199px;height:19px"></div>
<div class="abs wh" style="left:708px;top:96px;width:1px;height:20px"></div><div class="abs wh" style="left:509px;top:96px;width:200px;height:1px"></div>
<div class="abs tb" style="left:513px;top:100px;color:#808080;letter-spacing:-0.1px">Performance Summary</div>
<svg class="abs" style="left:676px;top:100px" width="30" height="12" viewBox="676 100 30 12"><g stroke="#666" fill="none"><path d="M695,102l7.5,7M702.5,102l-7.5,7" stroke-width="1"/><path d="M680.5,102.5v5h3v-5zM679,107.5h6M682,108v3" stroke-width="1" shape-rendering="crispEdges"/></g></svg>
<div class="abs wh" style="left:509px;top:116px;width:200px;height:515px"></div>
<div class="abs" style="left:513px;top:119px;width:9px;height:9px;box-sizing:border-box;border:1px solid #000"></div>
<div class="abs" style="left:515px;top:123px;width:5px;height:1px;background:#000"></div>
<div class="abs" style="left:530px;top:117.5px;font:bold 12px/15px 'Liberation Sans',sans-serif;color:#808080">GSVonTF_SL250.msa</div>
<div class="abs rw" style="left:530px;top:134.5px">Position Sizing:</div><div class="abs rw" style="left:614px;top:134.5px">Fixed Ratio</div>
<div class="abs rw" style="left:530px;top:151.5px">Initial Contracts:</div><div class="abs rw" style="left:614px;top:151.5px">1</div>
<div class="abs rw" style="left:530px;top:168.5px">Delta:</div><div class="abs rw" style="left:614px;top:168.5px">1 000,00 Kč</div>
<div class="abs rw" style="left:530px;top:185.5px">Delta Frac (d...</div><div class="abs rw" style="left:614px;top:185.5px">1,000</div>
<div class="abs rw" style="left:530px;top:202.5px">Starting Equity:</div><div class="abs rw" style="left:614px;top:202.5px">4 000,00 Kč</div>
<div class="abs rw" style="left:530px;top:219.5px">Equity High:</div><div class="abs rw" style="left:614px;top:219.5px">412 800,00 Kč</div>
<div class="abs rw" style="left:530px;top:236.5px">Equity Low:</div><div class="abs rw" style="left:614px;top:236.5px">3 500,00 Kč</div>
<div class="abs rw" style="left:530px;top:253.5px">Net Profit:</div><div class="abs rw" style="left:614px;top:253.5px">401 550,00 Kč</div>
<div class="abs rw" style="left:530px;top:270.5px">Final Equity:</div><div class="abs rw" style="left:614px;top:270.5px">405 550,00 Kč</div>
<div class="abs rw" style="left:530px;top:287.5px">Return on Sta...</div><div class="abs rw" style="left:614px;top:287.5px">10040%</div>
<div class="abs rw" style="left:530px;top:304.5px">Number of Tr...</div><div class="abs rw" style="left:614px;top:304.5px">369</div>
<div class="abs rw" style="left:530px;top:321.5px">Percent Profit...</div><div class="abs rw" style="left:614px;top:321.5px">46,07%</div>
<div class="abs rw" style="left:530px;top:338.5px">Max Contracts:</div><div class="abs rw" style="left:614px;top:338.5px">29</div>
<div class="abs rw" style="left:530px;top:355.5px">Largest Win:</div><div class="abs rw" style="left:614px;top:355.5px">16 800,00 Kč</div>
<div class="abs rw" style="left:530px;top:372.5px">Ave Win:</div><div class="abs rw" style="left:614px;top:372.5px">5 802,00 Kč</div>
<div class="abs rw" style="left:530px;top:389.5px">Max Consec ...</div><div class="abs rw" style="left:614px;top:389.5px">6</div>
<div class="abs rw" style="left:530px;top:406.5px">Largest Loss:</div><div class="abs rw" style="left:614px;top:406.5px">-7 250,00 Kč</div>
<div class="abs rw" style="left:530px;top:423.5px">Ave Loss:</div><div class="abs rw" style="left:614px;top:423.5px">-2 938,64 Kč</div>
<div class="abs rw" style="left:530px;top:440.5px">Max Consec ...</div><div class="abs rw" style="left:614px;top:440.5px">10</div>
<div class="abs rw" style="left:530px;top:457.5px">Win - Loss R...</div><div class="abs rw" style="left:614px;top:457.5px">1,974</div>
<div class="abs rw" style="left:530px;top:474.5px">Ave Trade:</div><div class="abs rw" style="left:614px;top:474.5px">1 088,21 Kč</div>
<div class="abs rw" style="left:530px;top:491.5px">Ave Trade (%):</div><div class="abs rw" style="left:614px;top:491.5px">1,407%</div>
<div class="abs rw" style="left:530px;top:508.5px">Max Drawdo...</div><div class="abs rw" style="left:614px;top:508.5px">61 150,00 Kč</div>
<div class="abs rw" style="left:530px;top:525.5px">Max Drawdo...</div><div class="abs rw" style="left:614px;top:525.5px">31,72%</div>
<div class="abs rw" style="left:530px;top:542.5px">Profit Factor:</div><div class="abs rw" style="left:614px;top:542.5px">1,687</div>
<div class="abs rw" style="left:530px;top:559.5px">Return - Draw...</div><div class="abs rw" style="left:614px;top:559.5px">316,5</div>

<!-- scrollbar -->
<div class="abs" style="left:693px;top:117px;width:16px;height:455px;background:repeating-conic-gradient(#fff 0% 25%,#ccc 0% 50%) 0 0/2px 2px"></div>
<div class="abs dk" style="left:706px;top:116px;width:3px;height:381px"></div>
<div class="abs wh" style="left:693px;top:117px;width:2px;height:379px"></div>
<div class="abs lt" style="left:695px;top:117px;width:11px;height:13px"></div>
<div class="abs dk" style="left:694px;top:130px;width:13px;height:2px"></div>
<div class="abs wh" style="left:694px;top:132px;width:12px;height:1px"></div>
<div class="abs lt" style="left:695px;top:133px;width:11px;height:363px"></div>
<div class="abs dk" style="left:694px;top:496px;width:13px;height:2px"></div>
<div class="abs" style="left:696.5px;top:117.5px;border:4px solid transparent;border-bottom:4px solid #000;width:0;height:0"></div>
<div class="abs wh" style="left:693px;top:556px;width:13px;height:14px"></div>
<div class="abs dk" style="left:706px;top:556px;width:3px;height:16px"></div>
<div class="abs lt" style="left:695px;top:558px;width:11px;height:12px"></div>
<div class="abs dk" style="left:694px;top:570px;width:13px;height:2px"></div>
<div class="abs" style="left:696.5px;top:562px;border:4px solid transparent;border-top:4px solid #000;width:0;height:0"></div>
<div class="abs" style="left:510px;top:577px;width:198px;height:1px;background:repeating-linear-gradient(90deg,#bbb 0 2px,#fff 2px 4px)"></div>
<div class="abs" style="left:707px;top:578px;width:1px;height:52px;background:#bbb"></div>
<div class="abs" style="left:510px;top:629px;width:198px;height:1px;background:repeating-linear-gradient(90deg,#bbb 0 2px,#fff 2px 4px)"></div>
<div class="abs" style="left:510px;top:578px;width:1px;height:52px;background:repeating-linear-gradient(0deg,#bbb 0 2px,#fff 2px 4px)"></div>
<!-- bottom -->
<div class="abs dk" style="left:1px;top:631px;width:711px;height:4px"></div>
<div class="abs tl" style="left:1px;top:635px;width:711px;height:3px"></div>
<div class="abs" style="left:1px;top:638px;width:711px;height:1px;background:#000080"></div>
<div class="abs" style="left:0;top:639px;width:713px;height:12px;background:#000"></div>
<div class="abs dk" style="left:0;top:651px;width:713px;height:3px"></div>
<div class="abs tb" style="left:8.5px;top:635.6px;color:#fff;letter-spacing:0.33px">For Help, press F1</div>
<div class="abs tb" style="left:608px;top:636.5px;color:#aaa">CAP</div>
<div class="abs tb" style="left:633px;top:636.5px;color:#aaa">NUM</div>
<div class="abs tb" style="left:665px;top:636.5px;color:#aaa">SCRL</div>
<svg class="abs" style="left:600px;top:634px" width="112" height="18" viewBox="600 634 112 18" shape-rendering="crispEdges"><g stroke="#aaa" fill="none"><path d="M603.5,636v14M629.5,636v14M660.5,636v14M691.5,636v14" /><path d="M602,649.5h2M628,649.5h2M659,649.5h2M690,649.5h2"/></g><g fill="#aaa"><rect x="708" y="640" width="2" height="2"/><rect x="704" y="644" width="2" height="2"/><rect x="708" y="644" width="2" height="2"/><rect x="700" y="648" width="2" height="2"/><rect x="704" y="648" width="2" height="2"/><rect x="708" y="648" width="2" height="2"/></g></svg>
</div>
</body></html>
